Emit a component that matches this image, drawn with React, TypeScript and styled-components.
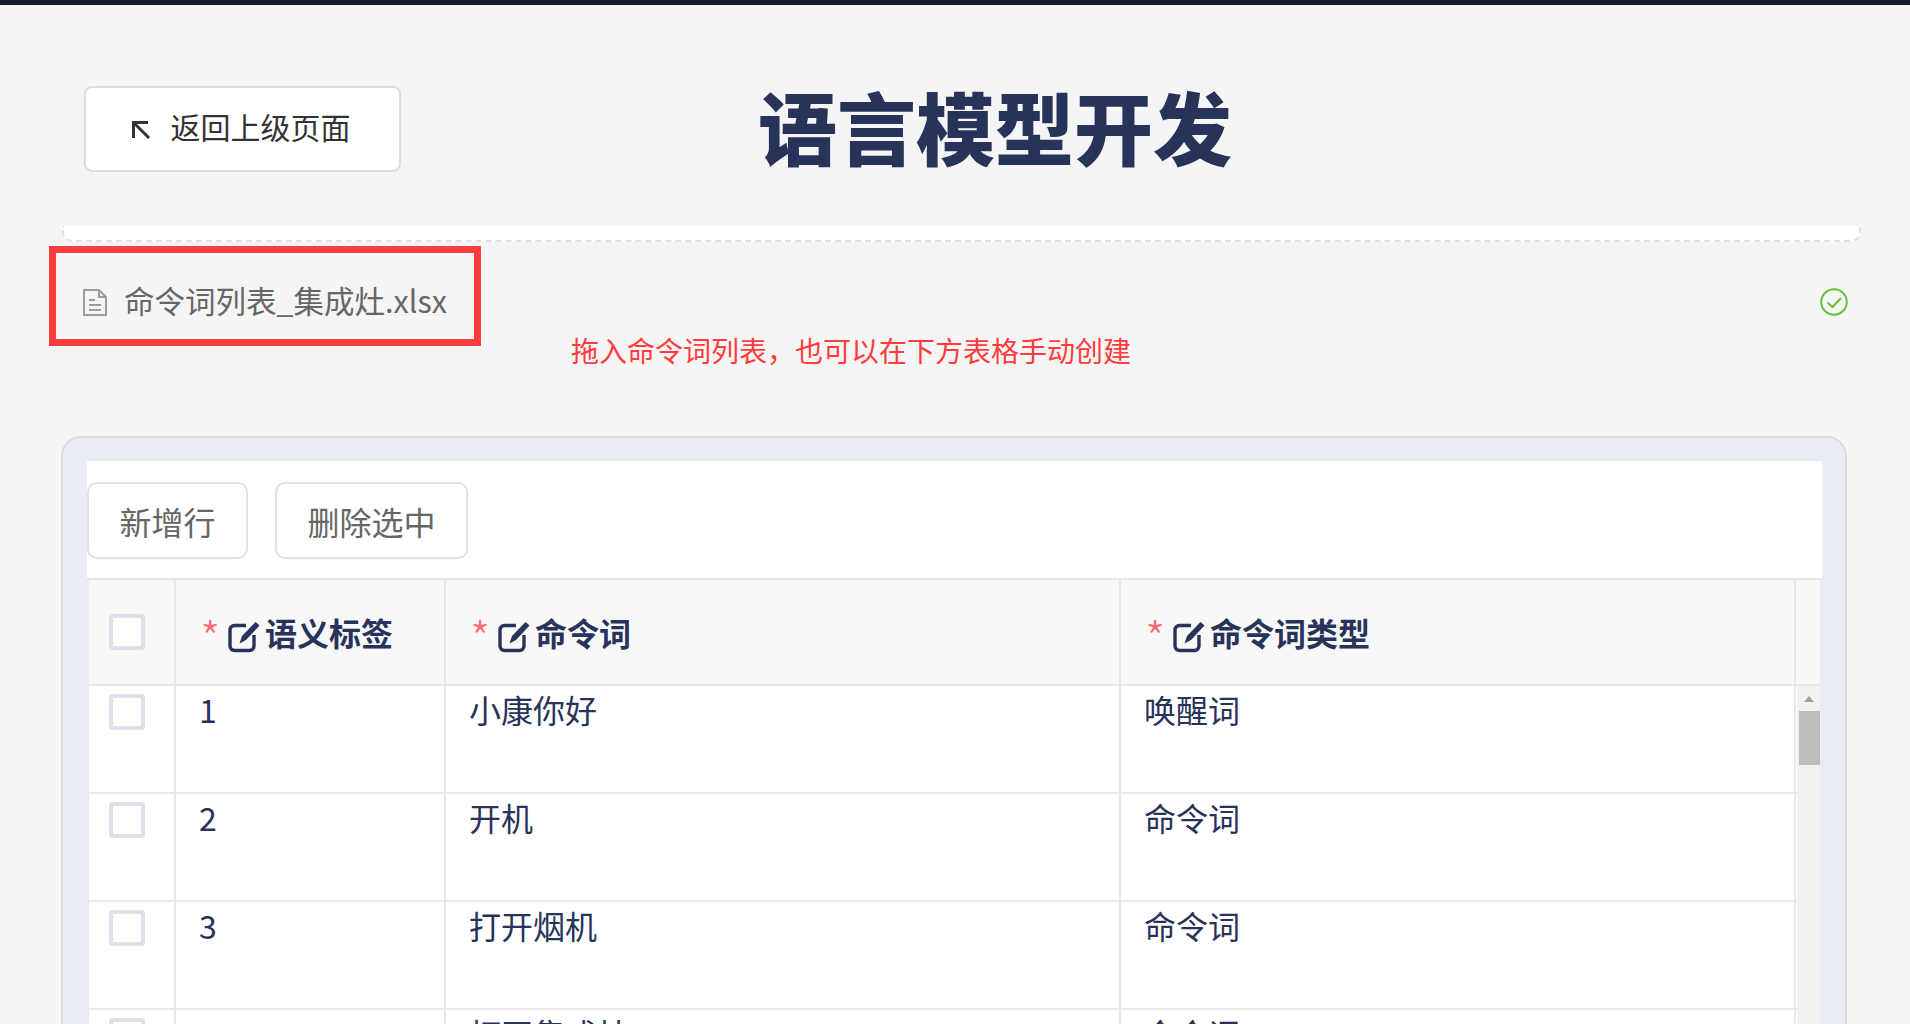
import React from 'react';
import styled, { createGlobalStyle } from 'styled-components';

const GlobalStyle = createGlobalStyle`
  html, body { margin: 0; padding: 0; height: 1024px; overflow: hidden; background: #f5f5f5; }
  * { box-sizing: border-box; }
  body { font-family: "Noto Sans CJK SC", "Noto Sans", sans-serif; }
`;

const Page = styled.div`
  height: 1024px;
  overflow: hidden;
  background: #f5f5f5;
`;
const TopBar = styled.div`
  height: 5px;
  background: #171a2b;
`;
const Header = styled.header`
  display: flex;
  align-items: center;
  height: 86px;
  margin: 81px 0 0 84px;
`;
const BackButton = styled.button`
  display: flex;
  align-items: center;
  justify-content: center;
  gap: 20px;
  width: 317px;
  height: 86px;
  padding: 0 4px 6px 0;
  background: #fff;
  border: 2px solid #ddd;
  border-radius: 8px;
  font: 400 30px/40px "Noto Sans CJK SC", sans-serif;
  color: #333;
  svg { margin-top: 8px; }
`;
const Title = styled.h1`
  margin: -6px 0 0 357px;
  font: 900 79px/86px "Noto Sans CJK SC", sans-serif;
  color: #28335a;
`;
const DropStrip = styled.div`
  height: 16px;
  margin: 54px 49px 0 62px;
  background: #fff;
  border: 2px dashed #dfe1ea;
  border-top: none;
  border-radius: 0 0 10px 10px;
`;
const FileRow = styled.div`
  position: relative;
  display: flex;
  align-items: center;
  justify-content: space-between;
  height: 48px;
  margin-top: 36px;
  padding: 0 62px 0 83px;
`;
const FileName = styled.div`
  display: flex;
  align-items: center;
  gap: 17px;
  padding-bottom: 5px;
  font-size: 30.5px;
  line-height: 48px;
  color: #666;
  svg { margin-top: 5px; }
`;
const Highlight = styled.div`
  position: absolute;
  left: 49px;
  top: -32px;
  width: 432px;
  height: 100px;
  border: 7px solid #ff3b3b;
`;
const Hint = styled.div`
  margin: 4px 0 0 571px;
  font-size: 28px;
  line-height: 40px;
  color: #ff3b3b;
`;
const Panel = styled.section`
  height: 700px;
  margin: 66px 63px 0 61px;
  padding: 23px 23px 0 24px;
  background: #e9ecf4;
  border: 2px solid #dcdcdc;
  border-radius: 20px;
`;
const Toolbar = styled.div`
  display: flex;
  gap: 27px;
  height: 119px;
  padding-top: 21px;
  background: #fff;
  border-bottom: 2px solid #e8e8e8;
`;
const ToolButton = styled.button`
  height: 77px;
  padding: 0 30.5px;
  background: #fff;
  border: 2px solid #dfe1ea;
  border-radius: 10px;
  font: 400 32px/40px "Noto Sans CJK SC", sans-serif;
  color: #666;
`;
const Table = styled.div`
  margin: 0 2px;
`;
const Columns = `
  display: grid;
  grid-template-columns: 87px 270px 675px 675px;
`;
const HeadRow = styled.div`
  ${Columns}
  grid-template-columns: 87px 270px 675px 675px 1fr;
  height: 106px;
  background: #f8f8f8;
  border-bottom: 2px solid #e8e8e8;
`;
const HeadCell = styled.div`
  display: flex;
  align-items: center;
  padding: 0 0 0 26px;
  border-right: 2px solid #e8e8e8;
  font-size: 32px;
  font-weight: 700;
  line-height: 48px;
  color: #28335a;
`;
const HeadFiller = styled.div``;
const CheckCell = styled.div<{ $head?: boolean }>`
  display: flex;
  justify-content: center;
  align-items: ${p => (p.$head ? 'center' : 'flex-start')};
  padding: ${p => (p.$head ? '0 9px 0 0' : '8px 9px 0 0')};
  border-right: 2px solid #e8e8e8;
`;
const Check = styled.span`
  display: block;
  width: 36px;
  height: 36px;
  background: #fff;
  border: 4px solid #dfe1e9;
  border-radius: 4px;
`;
const Star = styled.span`
  flex: none;
  width: 25px;
  margin-left: -2px;
  padding-top: 8px;
  font-size: 46px;
  font-weight: 300;
  line-height: 48px;
  color: #ff6b6b;
`;
const BodyWrap = styled.div`
  display: flex;
`;
const Rows = styled.div`
  flex: none;
  width: 1708px;
`;
const Row = styled.div`
  ${Columns}
  height: 108px;
  background: #fff;
  border-bottom: 2px solid #e8e8e8;
`;
const Cell = styled.div`
  padding-left: 23px;
  border-right: 2px solid #e8e8e8;
  font-size: 32px;
  line-height: 47px;
  color: #28335a;
`;
const Scrollbar = styled.div`
  flex: 1;
  padding: 10px 0 0 2px;
  background: #f1f1f1;
`;
const ScrollArrow = styled.div`
  width: 0;
  height: 0;
  margin-left: 5px;
  border: 5.5px solid transparent;
  border-top: none;
  border-bottom: 6px solid #a3a3a3;
`;
const ScrollThumb = styled.div`
  height: 54px;
  margin-top: 9px;
  background: #bdbdbd;
`;
const EditSvg = styled.svg`
  flex: none;
  margin: 9px 5px 0 3px;
`;

const BackIcon = () => (
  <svg width="20" height="20" viewBox="0 0 20 20" fill="none" stroke="#333" strokeWidth="3">
    <path d="M2.5 18V2.5H17" />
    <path d="M3 3l15 15" />
  </svg>
);
const FileIcon = () => (
  <svg width="24" height="27" viewBox="0 0 24 27" fill="none" stroke="#9a9ca3" strokeWidth="2">
    <path d="M1 1h15l7 7v18H1z" />
    <path d="M16 1v7h7" />
    <path d="M6 11h6M6 16h12M6 21h12" />
  </svg>
);
const CheckIcon = () => (
  <svg width="28" height="28" viewBox="0 0 28 28" fill="none" stroke="#67c23a">
    <circle cx="14" cy="14" r="12.8" strokeWidth="2" />
    <path d="M7.5 14.5l5 4.5 8.5-9" strokeWidth="2" />
  </svg>
);
const EditIcon = () => (
  <EditSvg width="32" height="32" viewBox="0 0 32 32" fill="none">
    <path d="M18 4.500H6.500A4.500 4.500 0 0 0 2 9v16A4.500 4.500 0 0 0 6.500 29.500h15A4.500 4.500 0 0 0 26 25V14" stroke="#28335a" strokeWidth="3.400" />
    <path d="M11.500 22.500L14 15 27.500 1l4 3.500L18 19z" fill="#28335a" />
  </EditSvg>
);

const rows = [
  ['1', '小康你好', '唤醒词'],
  ['2', '开机', '命令词'],
  ['3', '打开烟机', '命令词'],
  ['4', '打开集成灶', '命令词'],
];

const Head = ({ children }: { children: string }) => (
  <HeadCell>
    <Star>*</Star>
    <EditIcon />
    {children}
  </HeadCell>
);

export default function App() {
  return (
    <Page>
      <GlobalStyle />
      <TopBar />
      <Header>
        <BackButton>
          <BackIcon />
          返回上级页面
        </BackButton>
        <Title>语言模型开发</Title>
      </Header>
      <DropStrip />
      <FileRow>
        <FileName>
          <FileIcon />
          命令词列表_集成灶.xlsx
        </FileName>
        <CheckIcon />
        <Highlight />
      </FileRow>
      <Hint>拖入命令词列表，也可以在下方表格手动创建</Hint>
      <Panel>
        <Toolbar>
          <ToolButton>新增行</ToolButton>
          <ToolButton>删除选中</ToolButton>
        </Toolbar>
        <Table>
          <HeadRow>
            <CheckCell $head><Check /></CheckCell>
            <Head>语义标签</Head>
            <Head>命令词</Head>
            <Head>命令词类型</Head>
            <HeadFiller />
          </HeadRow>
          <BodyWrap>
            <Rows>
              {rows.map(r => (
                <Row key={r[0]}>
                  <CheckCell><Check /></CheckCell>
                  <Cell>{r[0]}</Cell>
                  <Cell>{r[1]}</Cell>
                  <Cell>{r[2]}</Cell>
                </Row>
              ))}
            </Rows>
            <Scrollbar>
              <ScrollArrow />
              <ScrollThumb />
            </Scrollbar>
          </BodyWrap>
        </Table>
      </Panel>
    </Page>
  );
}
